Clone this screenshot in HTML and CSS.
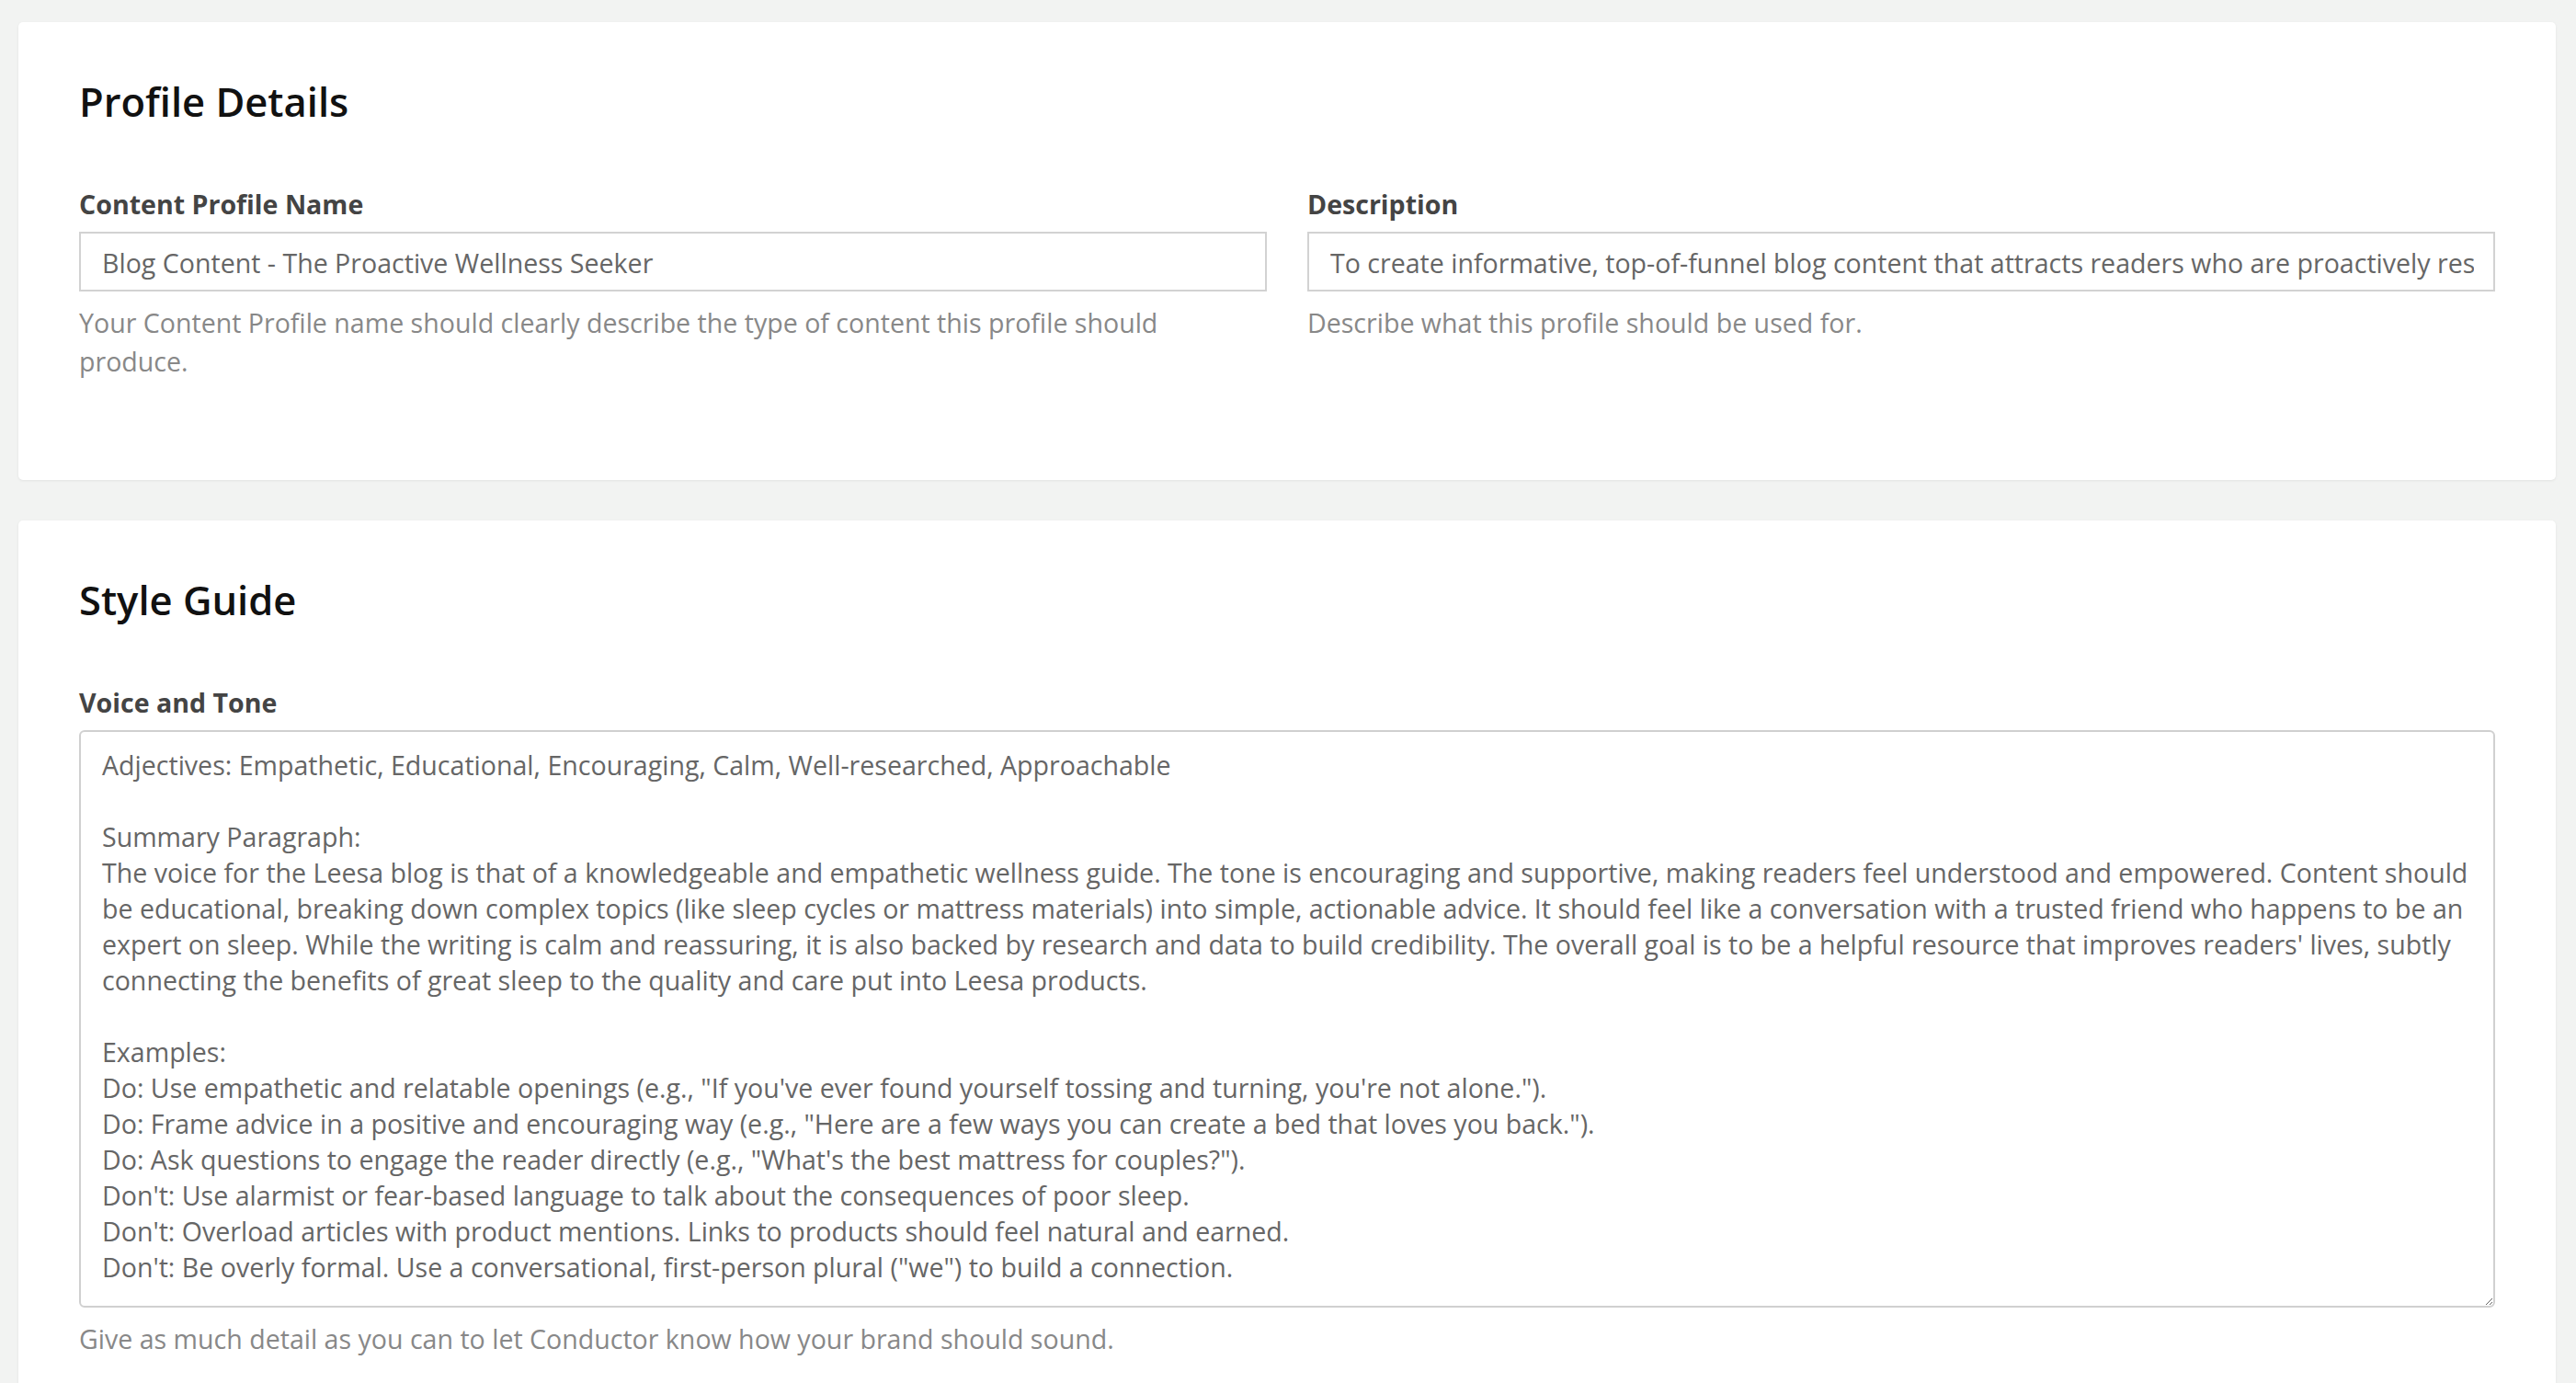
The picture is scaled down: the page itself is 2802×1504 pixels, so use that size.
FILE: index.html
```html
<!DOCTYPE html>
<html lang="en">
<head>
<meta charset="utf-8">
<title>Content Profile</title>
<link rel="stylesheet" href="styles.css">
</head>
<body>
<main class="page">
  <section class="card card-details">
    <h2 class="card-title">Profile Details</h2>
    <div class="grid-2">
      <div class="field">
        <label class="field-label" for="name">Content Profile Name</label>
        <input class="text-input" id="name" type="text" value="Blog Content - The Proactive Wellness Seeker">
        <p class="help">Your Content Profile name should clearly describe the type of content this profile should produce.</p>
      </div>
      <div class="field">
        <label class="field-label" for="desc">Description</label>
        <input class="text-input" id="desc" type="text" value="To create informative, top-of-funnel blog content that attracts readers who are proactively researching ways to improve their sleep and overall wellness.">
        <p class="help">Describe what this profile should be used for.</p>
      </div>
    </div>
  </section>

  <section class="card card-style">
    <h2 class="card-title">Style Guide</h2>
    <div class="field">
      <label class="field-label" for="voice">Voice and Tone</label>
      <textarea class="text-area" id="voice">Adjectives: Empathetic, Educational, Encouraging, Calm, Well-researched, Approachable

Summary Paragraph:
The voice for the Leesa blog is that of a knowledgeable and empathetic wellness guide. The tone is encouraging and supportive, making readers feel understood and empowered. Content should be educational, breaking down complex topics (like sleep cycles or mattress materials) into simple, actionable advice. It should feel like a conversation with a trusted friend who happens to be an expert on sleep. While the writing is calm and reassuring, it is also backed by research and data to build credibility. The overall goal is to be a helpful resource that improves readers' lives, subtly connecting the benefits of great sleep to the quality and care put into Leesa products.

Examples:
Do: Use empathetic and relatable openings (e.g., "If you've ever found yourself tossing and turning, you're not alone.").
Do: Frame advice in a positive and encouraging way (e.g., "Here are a few ways you can create a bed that loves you back.").
Do: Ask questions to engage the reader directly (e.g., "What's the best mattress for couples?").
Don't: Use alarmist or fear-based language to talk about the consequences of poor sleep.
Don't: Overload articles with product mentions. Links to products should feel natural and earned.
Don't: Be overly formal. Use a conversational, first-person plural ("we") to build a connection.</textarea>
      <p class="help">Give as much detail as you can to let Conductor know how your brand should sound.</p>
    </div>
  </section>
</main>
</body>
</html>
```

FILE: styles.css
```css
* { box-sizing: border-box; }

html, body {
  margin: 0;
  padding: 0;
  background: #f2f3f2;
  font-family: "Open Sans", "Noto Sans", sans-serif;
}

.page {
  display: flex;
  flex-direction: column;
  gap: 44px;
  padding: 24px 22px 40px 20px;
}

.card {
  background: #ffffff;
  border-radius: 5px;
  box-shadow: 0 1px 3px rgba(0, 0, 0, 0.07);
  padding: 62px 66px;
}

.card-details {
  padding-bottom: 108px;
}

.card-style {
  padding-bottom: 120px;
}

.card-title {
  margin: 0 0 68px 0;
  font-size: 43.5px;
  line-height: 50px;
  font-weight: 600;
  color: #111111;
}

.grid-2 {
  display: grid;
  grid-template-columns: 1fr 1fr;
  column-gap: 44px;
}

.field {
  display: flex;
  flex-direction: column;
  min-width: 0;
}

.field-label {
  display: block;
  font-size: 28.57px;
  line-height: 36px;
  font-weight: 700;
  color: #444444;
  margin-bottom: 12px;
}

.text-input {
  display: block;
  width: 100%;
  height: 65px;
  border: 2px solid #d2d2d2;
  border-radius: 0;
  padding: 2px 21px 0 23px;
  font-family: "Open Sans", "Noto Sans", sans-serif;
  font-size: 28.57px;
  color: #666666;
  background: #ffffff;
  outline: none;
}

.text-area {
  display: block;
  width: 100%;
  height: 628px;
  border: 2px solid #d0d0d0;
  border-radius: 6px;
  padding: 16px 23px 13px 23px;
  font-family: "Open Sans", "Noto Sans", sans-serif;
  font-size: 28.57px;
  line-height: 39px;
  color: #666666;
  background: #ffffff;
  outline: none;
}

.help {
  margin: 13px 0 0 0;
  font-size: 28.57px;
  line-height: 42px;
  color: #888888;
}
```
